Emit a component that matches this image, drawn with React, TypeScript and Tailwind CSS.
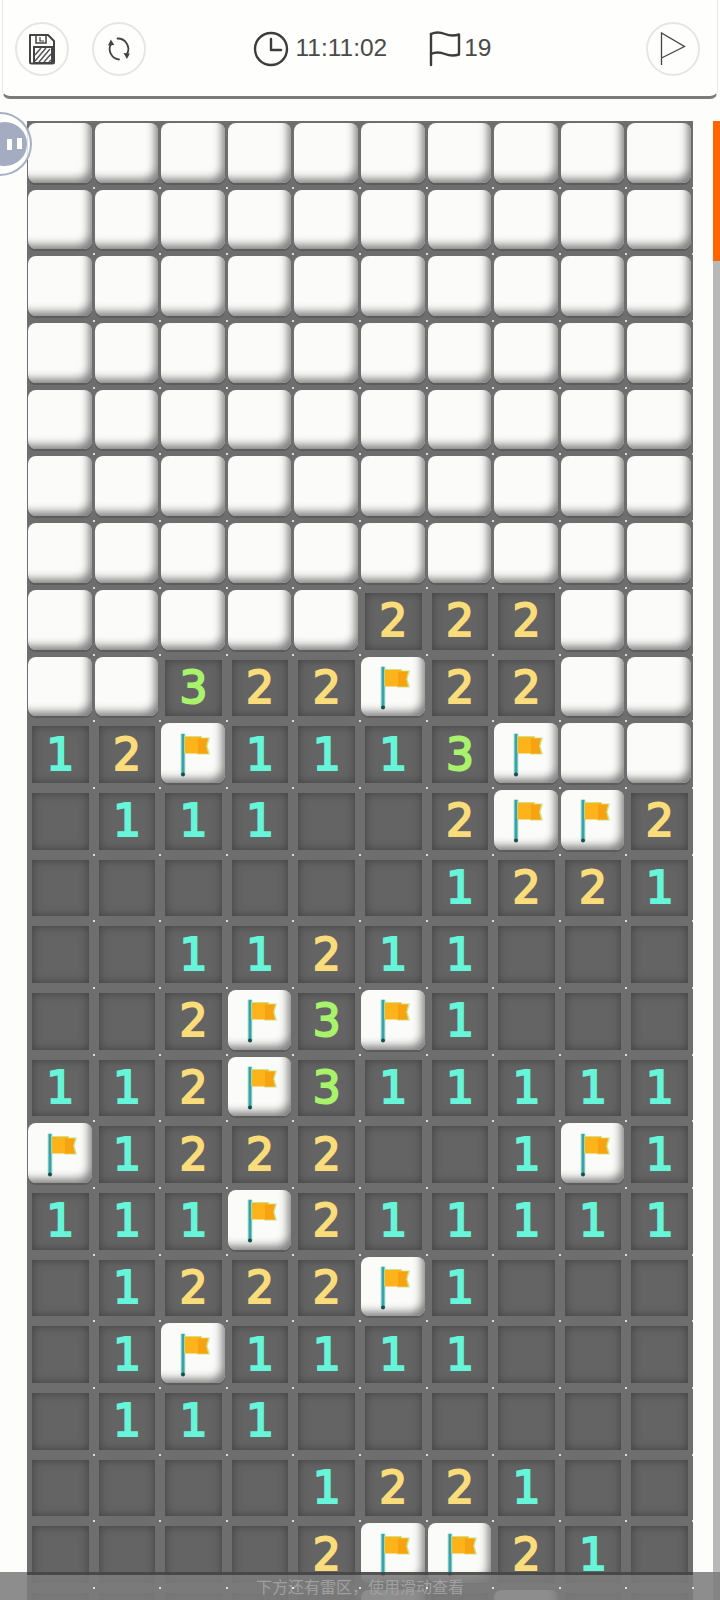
const U = "U";
const F = "F";
const _ = "";

const board: (string | number)[][] = [
  [U, U, U, U, U, U, U, U, U, U],
  [U, U, U, U, U, U, U, U, U, U],
  [U, U, U, U, U, U, U, U, U, U],
  [U, U, U, U, U, U, U, U, U, U],
  [U, U, U, U, U, U, U, U, U, U],
  [U, U, U, U, U, U, U, U, U, U],
  [U, U, U, U, U, U, U, U, U, U],
  [U, U, U, U, U, 2, 2, 2, U, U],
  [U, U, 3, 2, 2, F, 2, 2, U, U],
  [1, 2, F, 1, 1, 1, 3, F, U, U],
  [_, 1, 1, 1, _, _, 2, F, F, 2],
  [_, _, _, _, _, _, 1, 2, 2, 1],
  [_, _, 1, 1, 2, 1, 1, _, _, _],
  [_, _, 2, F, 3, F, 1, _, _, _],
  [1, 1, 2, F, 3, 1, 1, 1, 1, 1],
  [F, 1, 2, 2, 2, _, _, 1, F, 1],
  [1, 1, 1, F, 2, 1, 1, 1, 1, 1],
  [_, 1, 2, 2, 2, F, 1, _, _, _],
  [_, 1, F, 1, 1, 1, 1, _, _, _],
  [_, 1, 1, 1, _, _, _, _, _, _],
  [_, _, _, _, 1, 2, 2, 1, _, _],
  [_, _, _, _, 2, F, F, 2, 1, _],
  [_, _, _, _, _, U, _, U, _, _],
];

const numberColors: Record<number, string> = {
  1: "text-[#66f5d8]",
  2: "text-[#fadc7a]",
  3: "text-[#a9f26c]",
};

const FlagMark = () => (
  <svg width="32" height="46" viewBox="0 0 32 46" className="ml-[3px] mt-[1px]">
    <rect x="2.500" y="2" width="5" height="43" rx="1.500" fill="#9ce8b8" opacity="0.7" />
    <rect x="3.500" y="3" width="3" height="41" fill="#3b9fb0" />
    <circle cx="5" cy="43.500" r="2" fill="#1f4a4a" />
    <path d="M6 5h18v1.500h8l-2.500 8.500 2.500 8.500H19V22H6z" fill="#bfe070" opacity="0.8" />
    <path d="M7 6h16v1.500h7l-2 7.500 2 7.500H7z" fill="#ffb31a" />
    <path d="M20 7.500h10l-2 7.500 2 7.500H20z" fill="#f7a311" />
  </svg>
);

const Tile = ({ flag }: { flag?: boolean }) => (
  <div className="absolute left-[1px] right-[2px] top-[2px] bottom-[5px] flex items-center justify-center rounded-[8px] bg-[#fbfbfa] shadow-[inset_-7px_-8px_9px_-4px_rgba(105,105,105,0.85),0_2px_0_#5c5c5c]">
    {flag && <FlagMark />}
  </div>
);

const Cell = ({ value }: { value: string | number }) => (
  <div className="relative h-[66.7px]">
    {value === U || value === F ? (
      <Tile flag={value === F} />
    ) : (
      <div className="absolute left-[5px] right-[5px] top-[5px] bottom-[5px] flex items-center justify-center bg-[#646464] shadow-[inset_0_0_10px_rgba(55,55,55,0.8)]">
        {typeof value === "number" && (
          <span className={`font-['DejaVu_Sans',sans-serif] text-[44px] leading-none [-webkit-text-stroke:2px_currentColor] ${numberColors[value]}`}>
            {value}
          </span>
        )}
      </div>
    )}
    <div className="absolute bottom-[-1px] right-[-1px] z-10 size-[2px] rounded-full bg-white" />
  </div>
);

const SaveIcon = () => (
  <svg width="28" height="32" viewBox="0 0 28 32" fill="none" stroke="#444" strokeWidth="2">
    <path d="M2 2h18l6 6v21a1.500 1.500 0 0 1-1.500 1.500h-21A1.500 1.500 0 0 1 2 29z" strokeLinejoin="round" />
    <path d="M8 2v8h10V2" strokeWidth="1.500" />
    <path d="M12 4v4h4" strokeWidth="1.200" />
    <rect x="6" y="14" width="18" height="16" fill="#fff" />
    <path d="M7 22l6-7M7 28l11-13M11 29l11-13M16 29l7-8M21 29l2-2" strokeWidth="1.500" stroke="#555" />
  </svg>
);

const RefreshIcon = () => (
  <svg width="26" height="26" viewBox="0 0 26 26" fill="none" stroke="#444" strokeWidth="1.800" strokeLinecap="round">
    <path d="M5 8A10.500 10.500 0 0 0 13 23.500" />
    <path d="M11.500 2.500A10.500 10.500 0 0 1 21 18" />
    <path d="M2 9.500l2.800-6 3.600 5.600z" fill="#444" stroke="none" />
    <path d="M17.500 17l6.400.5-3 5.500z" fill="#444" stroke="none" />
  </svg>
);

const ClockIcon = () => (
  <svg width="36" height="36" viewBox="0 0 36 36" fill="none" stroke="#3c3c3c" strokeWidth="2.400" strokeLinecap="round" strokeLinejoin="round">
    <circle cx="18" cy="18" r="16" />
    <path d="M18 8v11h10" />
  </svg>
);

const CountFlagIcon = () => (
  <svg width="32" height="36" viewBox="0 0 32 36" fill="none" stroke="#3c3c3c" strokeWidth="2.400" strokeLinecap="round" strokeLinejoin="round">
    <path d="M2 34V3" />
    <path d="M2 3c4-2 9-2 14 0s9 2 14 .5v20c-5 1.500-9 1.500-14-.5s-10-2-14 0" />
  </svg>
);

const PlayFlagIcon = () => (
  <svg width="26" height="34" viewBox="0 0 26 34" fill="none" stroke="#444" strokeWidth="1.300" strokeLinejoin="miter">
    <path d="M1.500 33V1l23 13.500L1.500 26" />
  </svg>
);

const RoundButton = ({ children }: { children: React.ReactNode }) => (
  <div className="flex size-[54px] items-center justify-center rounded-full border-2 border-[#e6e6e4] bg-[#fefefd]">
    {children}
  </div>
);

export default function App() {
  return (
    <div className="relative flex h-[1600px] w-[720px] flex-col overflow-hidden bg-[#fdfdfb] font-['Liberation_Sans',sans-serif]">
      <header className="mx-[2px] flex h-[99px] shrink-0 items-center justify-between rounded-b-lg border-x border-b-[3px] border-x-[#e8e8e6] border-b-[#7b7b7b] bg-[#fefefd] pl-[12px] pr-[17px] pt-[1px]">
        <div className="flex gap-[23px]">
          <RoundButton>
            <SaveIcon />
          </RoundButton>
          <RoundButton>
            <RefreshIcon />
          </RoundButton>
        </div>
        <div className="mr-[48px] flex items-center text-[24.5px] text-[#4a4a4a]">
          <ClockIcon />
          <span className="ml-[7px]">11:11:02</span>
          <span className="ml-[42px] flex items-center">
            <CountFlagIcon />
            <span className="ml-[3px]">19</span>
          </span>
        </div>
        <RoundButton>
          <PlayFlagIcon />
        </RoundButton>
      </header>

      <main className="flex flex-1 gap-[20px] pl-[27px] pt-[22px]">
        <div className="grid h-fit w-[666px] grid-cols-10 bg-[#6e6e6e]">
          {board.flat().map((value, i) => (
            <Cell key={i} value={value} />
          ))}
        </div>
        <div className="w-[7px] bg-[#b8b8b8]">
          <div className="h-[140px] bg-[#ff6400]" />
        </div>
      </main>

      <div className="absolute left-0 top-[112px] h-[64px] w-[32px] rounded-r-full border-2 border-l-0 border-[#a6afc2] bg-white/80">
        <div className="absolute left-[-17px] top-[8px] size-[44px] rounded-full bg-[#a3acc0]" />
        <div className="absolute left-[7px] top-[25px] h-[11px] w-[5px] bg-white" />
        <div className="absolute left-[17px] top-[24px] h-[11px] w-[5px] bg-white" />
      </div>

      <div className="absolute inset-x-0 bottom-0 flex h-[28px] items-center justify-center bg-[rgba(124,124,124,0.87)] font-['Noto_Sans_CJK_SC',sans-serif] text-[16px] text-[#a0a0a0]">
        <div className="absolute left-[27px] top-0 h-[3px] w-[666px] bg-black/40" />
        下方还有雷区，使用滑动查看
      </div>
    </div>
  );
}
